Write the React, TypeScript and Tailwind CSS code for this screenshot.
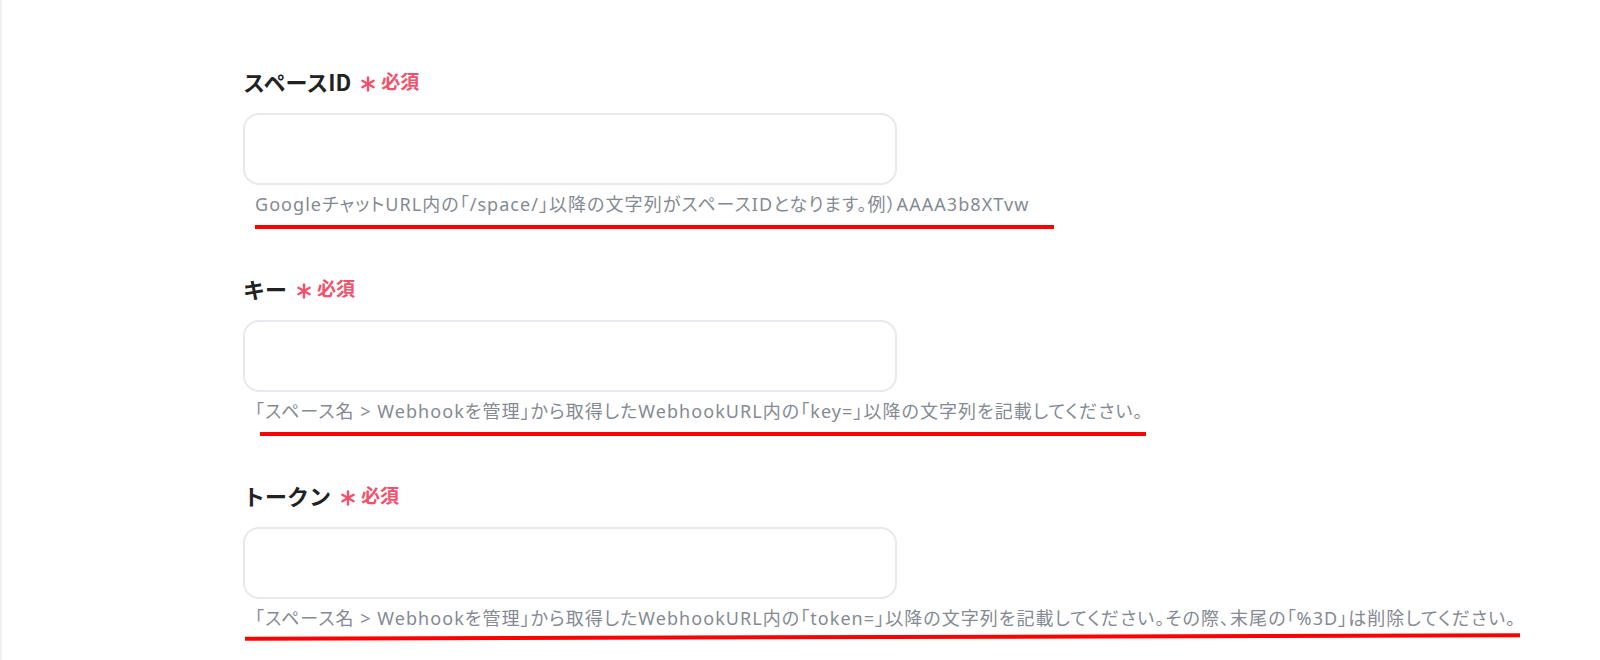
import React from 'react';

const Asterisk = () => (
  <svg width="16" height="16" viewBox="0 0 16 16" className="mt-[5px]">
    <g stroke="#f2506b" strokeWidth="2.4" strokeLinecap="round">
      <line x1="8" y1="1.5" x2="8" y2="14.5" />
      <line x1="2.4" y1="4.75" x2="13.6" y2="11.25" />
      <line x1="2.4" y1="11.25" x2="13.6" y2="4.75" />
    </g>
  </svg>
);

interface FieldProps {
  label: string;
  help: string;
  lineClass: string;
}

const Field: React.FC<FieldProps> = ({ label, help, lineClass }) => (
  <div className="flex flex-col">
    <div className="flex items-center h-[28px]">
      <span className="text-[22px] font-bold text-[#222222] leading-[28px]">{label}</span>
      <span className="ml-[9px]">
        <Asterisk />
      </span>
      <span className="ml-[5px] text-[19px] font-bold text-[#f2506b] leading-[28px]">必須</span>
    </div>
    <div className="mt-[18px] w-[654px] h-[72px] rounded-[16px] border-2 border-[#e8e9ec] bg-white" />
    <p
      className="mt-[6px] pl-[12px] text-[18px] leading-[26px] tracking-[1.05px] text-[#848a93] [font-feature-settings:'palt']"
      style={{ fontFamily: '"Noto Sans", "Noto Sans CJK JP", sans-serif' }}
    >
      {help}
    </p>
    <div className={lineClass} />
  </div>
);

export default function App() {
  return (
    <div
      className="w-[1600px] h-[660px] bg-white border-l-2 border-[#f0f0f0] overflow-hidden"
      style={{ fontFamily: '"Noto Sans CJK JP", "Noto Sans", sans-serif' }}
    >
      <div className="pl-[241px] pt-[67px] flex flex-col gap-[45px]">
        <Field
          label="スペースID"
          help="GoogleチャットURL内の「/space/」以降の文字列がスペースIDとなります。例）AAAA3b8XTvw"
          lineClass="mt-[8px] ml-[12px] w-[799px] h-[4px] bg-[#ff0000]"
        />
        <Field
          label="キー"
          help="「スペース名 > Webhookを管理」から取得したWebhookURL内の「key=」以降の文字列を記載してください。"
          lineClass="mt-[8px] ml-[17px] w-[886px] h-[4px] bg-[#ff0000]"
        />
        <Field
          label="トークン"
          help="「スペース名 > Webhookを管理」から取得したWebhookURL内の「token=」以降の文字列を記載してください。その際、末尾の「%3D」は削除してください。"
          lineClass="mt-[4px] ml-[2px] w-[1275px] h-[4px] bg-[#ff0000] -rotate-[0.15deg]"
        />
      </div>
    </div>
  );
}
